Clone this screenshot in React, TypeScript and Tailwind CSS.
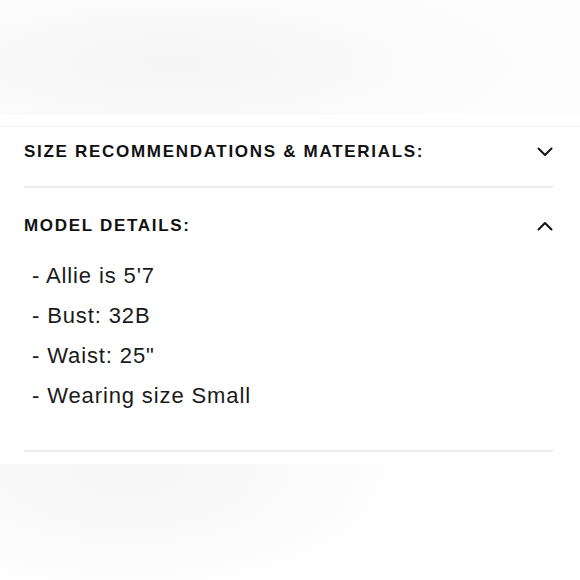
import React from "react";

function ChevronDown() {
  return (
    <svg width="16" height="10" viewBox="0 0 16 10" fill="none">
      <path d="M1.5 1.5 L8 8 L14.5 1.5" stroke="#111" strokeWidth="2" strokeLinecap="round" strokeLinejoin="round" />
    </svg>
  );
}
function ChevronUp() {
  return (
    <svg width="16" height="10" viewBox="0 0 16 10" fill="none">
      <path d="M1.5 8.5 L8 2 L14.5 8.5" stroke="#111" strokeWidth="2" strokeLinecap="round" strokeLinejoin="round" />
    </svg>
  );
}

export default function App() {
  const items = ["- Allie is 5'7", "- Bust: 32B", "- Waist: 25\"", "- Wearing size Small"];
  return (
    <div className="w-[580px] h-[580px] overflow-hidden bg-white" style={{ fontFamily: "'Liberation Sans', Arial, sans-serif" }}>
      <div className="h-[115px] bg-[radial-gradient(ellipse_60%_80%_at_30%_55%,#f5f5f5_0%,#f9f9f9_50%,#fdfdfd_100%)]" />
      <div className="h-[12px] bg-white border-b border-[#f0f0f0]" />
      <div className="pl-[24px] pr-[27px]">
        <div className="flex items-center justify-between h-[46px] pt-[4px]">
          <span className="text-[17px] font-bold tracking-[0.1em] text-[#111]">SIZE RECOMMENDATIONS &amp; MATERIALS:</span>
          <ChevronDown />
        </div>
        <div className="h-[13px]" />
        <div className="border-t-2 border-[#ececec]" />
        <div className="flex items-center justify-between h-[24px] mt-[26px]">
          <span className="text-[17px] font-bold tracking-[0.1em] text-[#111]">MODEL DETAILS:</span>
          <ChevronUp />
        </div>
        <ul className="mt-[18px] pl-[8px] text-[22px] tracking-[0.04em] text-[#1a1a1a]">
          {items.map((t) => (
            <li key={t} className="h-[40px] leading-[40px]">{t}</li>
          ))}
        </ul>
        <div className="h-[34px]" />
        <div className="border-t-2 border-[#ececec]" />
      </div>
      <div className="h-[12px] bg-white" />
      <div className="h-[120px] bg-[radial-gradient(ellipse_50%_110%_at_22%_5%,#f6f6f6_0%,#fafafa_55%,#ffffff_100%)]" />
    </div>
  );
}
